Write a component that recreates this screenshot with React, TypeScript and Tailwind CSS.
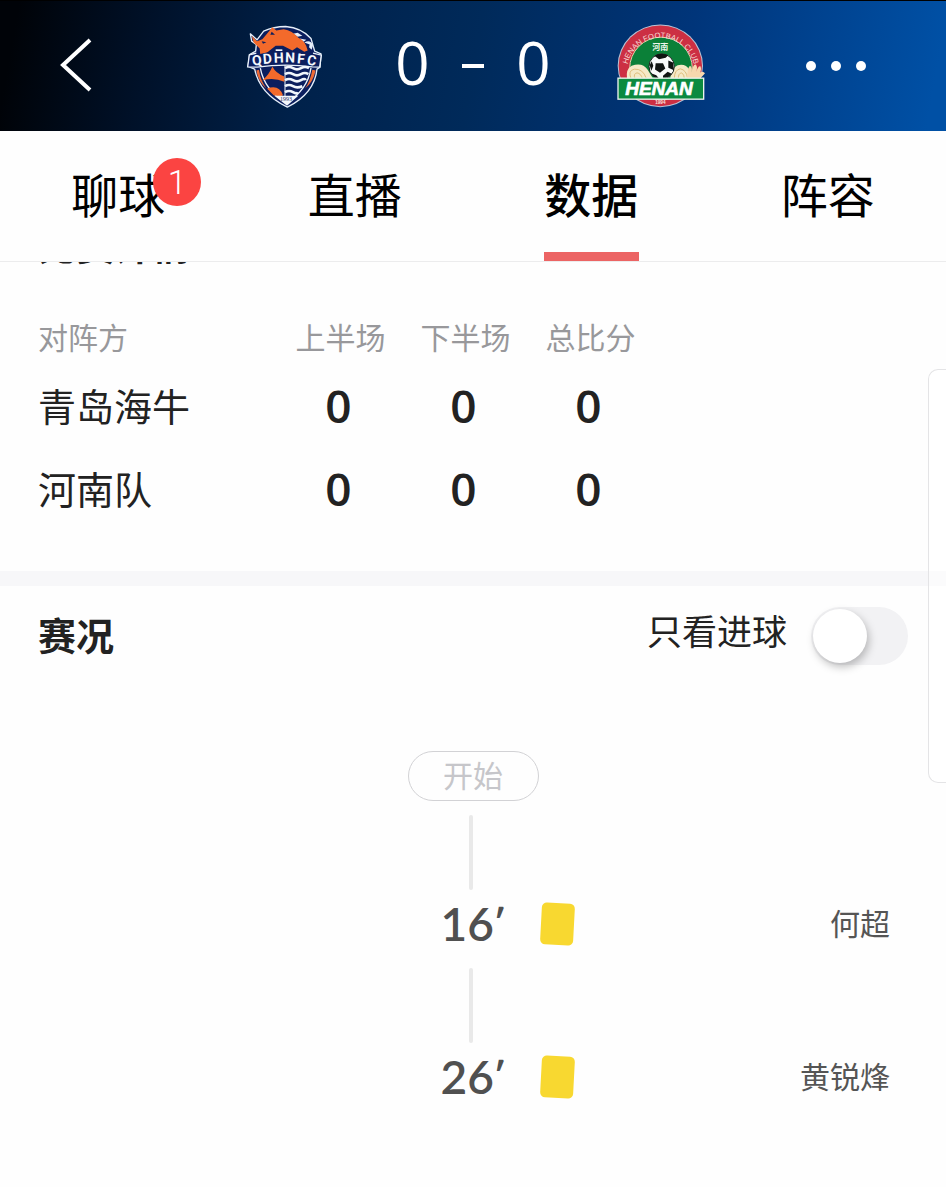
import { useState } from "react";

const tabs = [
  { label: "聊球", badge: 1 },
  { label: "直播" },
  { label: "数据" },
  { label: "阵容" },
];

const halves = ["上半场", "下半场", "总比分"];

const teams = [
  { name: "青岛海牛", scores: [0, 0, 0] },
  { name: "河南队", scores: [0, 0, 0] },
];

const events = [
  { minute: "16", player: "何超" },
  { minute: "26", player: "黄锐烽" },
];

const crestLetters: [string, number, number, number][] = [
  ["Q", 86, 166, -8],
  ["D", 116, 161, -5],
  ["H", 150, 158, -2],
  ["N", 183, 158, 2],
  ["F", 215, 161, 5],
  ["C", 246, 166, 9],
];

function QingdaoCrest() {
  return (
    <svg viewBox="36 40 270 260" className="h-[87px] w-[90px]" role="img" aria-label="青岛海牛">
      <path d="M64 72 L84 90 L104 64 Q134 50 170 50 Q218 54 246 86 L257 124 L276 132 L273 172 L264 178 Q256 252 175 292 Q92 252 77 178 L57 170 L62 134 L80 124 L82 104 L68 94 Z" fill="#0b1e5e" stroke="#e6eff9" strokeWidth="4" strokeLinejoin="round" />
      <path d="M192 72 l14 -3 14 9 -14 3z M226 98 q18 -10 26 8 l-4 14 -8 -8 2 -8z M212 86 l20 4 -8 6z" fill="#e6effa" />
      <path d="M68 78 L84 94 L100 88 L114 72 L130 52 L142 62 L164 58 Q190 62 208 84 Q230 94 236 122 L226 126 L204 112 L190 122 L162 108 L140 108 L122 122 L104 136 L94 136 L92 116 L74 98 Z" fill="#f36a2b" />
      <path d="M98 94 l14 3 -10 5z M128 66 l10 9 -14 0z" fill="#0b1e5e" />
      <path d="M60 136 L82 130 L86 134 L124 126 H216 L250 132 L276 136 L271 172 L250 168 Q168 160 84 172 L56 172 Z" fill="#0b1e5e" />
      <path d="M82 130 L61 135 L56 171 L84 172 Q168 160 250 171 L272 172 L277 136 L252 130" fill="none" stroke="#eaf2fb" strokeWidth="4" />
      <path d="M82 182 L90 180 Q94 212 112 236 Q88 216 82 182Z M260 182 L250 180 Q244 214 228 236 Q252 218 260 182Z" fill="#ef6b35" />
      <path d="M94 175 Q106 240 172 280 Q236 240 246 174" fill="none" stroke="#eaf2fb" strokeWidth="4" />
      <path d="M168 166 V264" stroke="#eaf2fb" strokeWidth="3" />
      <path d="M130 170 Q140 190 166 200 L166 216 Q134 202 100 212 Q122 192 130 170Z M114 236 Q150 222 162 256 L154 260 L134 256Z" fill="#f36a2b" />
      <g fill="none" stroke="#f1f6fc" strokeWidth="8">
        <path d="M168 175 q12 -7 24 0 t24 0 t24 0" />
        <path d="M168 193 q12 -7 24 0 t24 0 t22 0" />
        <path d="M168 211 q12 -7 24 0 t24 0 t14 0" />
        <path d="M168 229 q12 -7 24 0 t28 0" />
        <path d="M168 247 q12 -7 24 0 t14 0" />
      </g>
      <path d="M136 258 H208 L174 288Z" fill="#f4f7fb" />
      <text x="171" y="274" textAnchor="middle" fontSize="18" fontFamily="Liberation Serif, serif" fill="#26345f">1993</text>
      {crestLetters.map(([char, x, y, turn]) => (
        <text key={char} x={x} y={y} textAnchor="middle" fontSize="42" fontWeight="700" fontFamily="Roboto, sans-serif" fill="#f4f8fd" transform={`rotate(${turn} ${x} ${y})`}>{char}</text>
      ))}
      <path d="M140 121 h20" stroke="#f4f8fd" strokeWidth="5" />
    </svg>
  );
}

function HenanCrest() {
  return (
    <svg viewBox="46 40 270 260" className="h-[87px] w-[90px]" role="img" aria-label="河南队">
      <defs>
        <path id="henan-arc" d="M82 172 A102 102 0 0 1 284 172" />
      </defs>
      <ellipse cx="182" cy="168" rx="128" ry="124" fill="#b9c4d6" />
      <ellipse cx="182" cy="168" rx="125" ry="121" fill="#cc2f43" />
      <circle cx="184" cy="176" r="94" fill="#0b8038" stroke="#e3cfa9" strokeWidth="3" />
      <text fontSize="23" fontWeight="400" fontFamily="Liberation Sans, sans-serif" fill="#f7d9d3">
        <textPath href="#henan-arc" startOffset="50%" textAnchor="middle">HENAN FOOTBALL CLUB</textPath>
      </text>
      <text x="182" y="120" textAnchor="middle" fontSize="24" fontWeight="700" fontFamily="Noto Sans CJK SC, sans-serif" fill="#eef7ee">河南</text>
      <path d="M82 206 Q78 178 96 168 Q128 156 144 180 L160 206Z M212 206 Q212 176 234 166 Q258 160 270 180 L276 206Z" fill="#f5e9c6" />
      <path d="M94 206 Q84 182 104 178 Q130 176 140 206 M106 206 Q100 192 112 189 Q124 191 128 206 M224 206 Q224 180 242 177 Q260 180 264 206 M236 206 Q236 190 246 189 Q254 194 254 206" fill="none" stroke="#dfbd7c" strokeWidth="3" />
      <path d="M262 206 Q264 172 271 168 Q279 172 276 188 Q280 162 288 164 Q295 170 290 186 Q296 166 303 170 Q306 176 302 188 Q310 182 316 190 Q308 200 300 206Z" fill="#f7d8ae" />
      <circle cx="186" cy="170" r="38" fill="#f8fafa" stroke="#142019" strokeWidth="3" />
      <path d="M164 138 Q184 126 206 136 L198 144 L178 148Z M206 152 L220 158 L223 181 L206 174Z M168 160 L190 160 L197 176 L181 189 L166 179Z M150 166 L156 154 L161 168 L155 183Z M190 198 L204 186 L216 192 Q206 206 190 206Z M154 190 L170 196 L178 206 Q162 206 154 190Z" fill="#101412" />
      <rect x="55" y="205" width="257" height="63" fill="#0b8a40" stroke="#eaf4ed" strokeWidth="4" />
      <text x="178" y="255" textAnchor="middle" fontSize="57" fontStyle="italic" fontWeight="700" fontFamily="Liberation Sans, sans-serif" fill="#fff" stroke="#fff" strokeWidth="2">HENAN</text>
      <text x="182" y="283" textAnchor="middle" fontSize="14" fontWeight="700" fontFamily="Liberation Sans, sans-serif" fill="#f9e1dc">1994</text>
    </svg>
  );
}

function Header() {
  return (
    <header className="grid h-[131px] grid-cols-[1fr_auto_1fr] items-center border-t border-black bg-[linear-gradient(100deg,#000308_2%,#001129_16%,#00214a_32%,#002a5a_50%,#00357a_72%,#0050a5_98%)]">
      <button aria-label="返回" className="ml-[60px] w-8">
        <svg viewBox="0 0 32 56" className="h-14 w-8" fill="none" stroke="#fff" strokeWidth="4">
          <path d="M30 2 L3 27 L30 52" />
        </svg>
      </button>
      <div className="flex items-center">
        <QingdaoCrest />
        <div className="grid w-[284px] grid-cols-[1fr_22px_1fr] items-center px-8 pb-2 text-center font-['Open_Sans',sans-serif] text-[60px] leading-[64px] font-normal text-white">
          <span>0</span>
          <span className="mt-2 h-1 bg-white" />
          <span>0</span>
        </div>
        <HenanCrest />
      </div>
      <button aria-label="更多" className="mr-20 flex gap-[15px] justify-self-end">
        <i className="size-[10px] rounded-full bg-white" />
        <i className="size-[10px] rounded-full bg-white" />
        <i className="size-[10px] rounded-full bg-white" />
      </button>
    </header>
  );
}

function TabBar({ active, onSelect }: { active: string; onSelect: (label: string) => void }) {
  return (
    <nav className="grid h-[131px] grid-cols-4 border-b border-[#ececed] text-[47px] leading-[64px] text-black">
      {tabs.map(({ label, badge }) => (
        <button key={label} onClick={() => onSelect(label)} className="flex flex-col items-center justify-between pt-[30px]">
          <span className={active === label ? "relative font-medium" : "relative font-normal"}>
            {label}
            {badge && (
              <span className="absolute -top-[3px] -right-9 size-12 rounded-full bg-[#fb4442] text-center font-[Roboto,sans-serif] text-[34px] leading-[48px] font-light text-white">{badge}</span>
            )}
          </span>
          {active === label && <span className="h-[9px] w-[95px] bg-[#ec6464]" />}
        </button>
      ))}
    </nav>
  );
}

function ScoreTable() {
  return (
    <section className="border-b-[15px] border-[#f7f7f9] pb-10">
      <div className="flex h-11 flex-col overflow-hidden pl-[38px]">
        <h2 className="-mt-[42px] text-[38px] leading-[48px] font-bold text-[#222]">比赛详情</h2>
      </div>
      <table className="ml-[38px] table-fixed border-collapse text-[#222]">
        <thead>
          <tr className="h-[59px] text-[30px] leading-[40px] text-[#98989b]">
            <th className="w-[240px] p-0 text-left font-normal">对阵方</th>
            {halves.map((half) => (
              <th key={half} className="w-[125px] p-0 font-normal whitespace-nowrap">{half}</th>
            ))}
          </tr>
        </thead>
        <tbody>
          {teams.map(({ name, scores }) => (
            <tr key={name} className="h-[83px] text-[38px] leading-[48px]">
              <th className="p-0 pb-1 text-left font-normal">{name}</th>
              {scores.map((score, index) => (
                <td key={index} className="p-0 pr-1 pb-1 text-center font-['Open_Sans',sans-serif] text-[46px] font-semibold">{score}</td>
              ))}
            </tr>
          ))}
        </tbody>
      </table>
    </section>
  );
}

function Timeline() {
  const [goalsOnly, setGoalsOnly] = useState(false);
  return (
    <section>
      <div className="flex h-[100px] items-center justify-between px-[38px]">
        <h2 className="pb-1 text-[38px] leading-[48px] font-bold text-[#222]">赛况</h2>
        <label className="flex items-center gap-6 text-[35px] leading-[48px] text-[#222]">
          <span className="pb-3">只看进球</span>
          <input
            type="checkbox"
            checked={goalsOnly}
            onChange={(event) => setGoalsOnly(event.target.checked)}
            className="h-[58px] w-[97px] appearance-none rounded-full bg-[#f2f2f4] p-[2px] before:block before:size-[54px] before:rounded-full before:bg-white before:shadow-[2px_4px_8px_rgba(0,0,0,0.25)] checked:bg-[#ec6464] checked:before:ml-[39px]"
          />
        </label>
      </div>
      <div className="flex flex-col items-center pt-[65px]">
        <span className="h-[50px] w-[131px] rounded-full border border-[#d2d2d5] text-center text-[30px] leading-[44px] text-[#c6c6ca]">开始</span>
        <ol className="w-full">
          {!goalsOnly &&
            events.map(({ minute, player }) => (
              <li key={minute} className="grid grid-cols-[1fr_110px_1fr] items-center">
                <span className="col-start-2 mt-[14px] mr-1 h-[75px] w-1 justify-self-center rounded-full bg-[#e9e9e9]" />
                <time className="col-start-2 row-start-2 flex h-16 items-start justify-center pt-1 font-[Lato,sans-serif] text-[46px] leading-[60px] font-semibold text-[#505050]">
                  {minute}
                  <span className="text-[34px] leading-[54px] font-black">′</span>
                </time>
                <div className="col-start-3 row-start-2 flex items-center justify-between pt-1 pr-14 pl-[13px]">
                  <span className="h-[42px] w-[33px] rotate-3 rounded-[5px] bg-[#f8d830]" />
                  <span className="pb-1 text-[30px] leading-[40px] text-[#555]">{player}</span>
                </div>
              </li>
            ))}
        </ol>
      </div>
    </section>
  );
}

export default function App() {
  const [active, setActive] = useState("数据");
  return (
    <div className="relative min-h-screen overflow-hidden bg-[#fefefe] font-['Noto_Sans_CJK_SC',sans-serif]">
      <Header />
      <TabBar active={active} onSelect={setActive} />
      <main>
        <ScoreTable />
        <Timeline />
      </main>
      <aside className="absolute top-[369px] right-0 h-[414px] w-[18px] rounded-l-[10px] border border-r-0 border-[#e4e4e6] bg-white/50" />
    </div>
  );
}
